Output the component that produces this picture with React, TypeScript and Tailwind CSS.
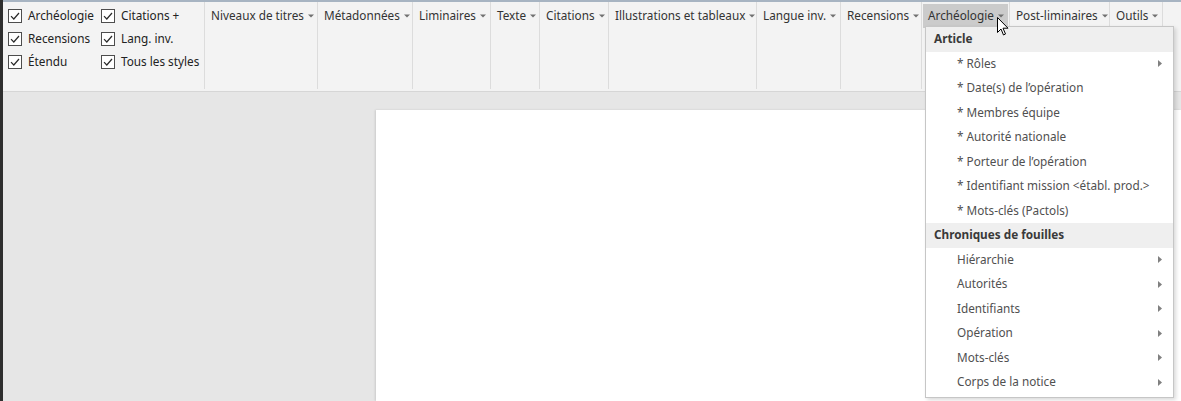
import React from "react";

const font = { fontFamily: '"Noto Sans", "Open Sans", sans-serif' };

const Caret = () => (
  <svg width="6" height="4" viewBox="0 0 6 4" className="ml-[4px] mt-[1px] shrink-0">
    <path d="M0 0.5 L6 0.5 L3 3.5 Z" fill="#707070" />
  </svg>
);

const Check = ({ label }: { label: string }) => (
  <div className="flex items-center h-[23px] gap-[6px] whitespace-nowrap">
    <svg width="14" height="14" viewBox="0 0 14 14" className="shrink-0">
      <rect x="0.5" y="0.5" width="13" height="13" fill="#fff" stroke="#4d4d4d" />
      <path d="M3 7.2 L5.8 10 L11 4" fill="none" stroke="#2b2b2b" strokeWidth="1.2" />
    </svg>
    <span className="text-[11.75px] text-[#222]">{label}</span>
  </div>
);

const groups: { label: string; w: string; active?: boolean }[] = [
  { label: "Niveaux de titres", w: "w-[113px]" },
  { label: "Métadonnées", w: "w-[95px]" },
  { label: "Liminaires", w: "w-[78px]" },
  { label: "Texte", w: "w-[49px]" },
  { label: "Citations", w: "w-[69px]" },
  { label: "Illustrations et tableaux", w: "w-[148px]" },
  { label: "Langue inv.", w: "w-[84px]" },
  { label: "Recensions", w: "w-[81px]" },
  { label: "Archéologie", w: "w-[88px]", active: true },
  { label: "Post-liminaires", w: "w-[100px]" },
  { label: "Outils", w: "w-[53px]" },
];

const Arrow = () => (
  <svg width="4" height="7" viewBox="0 0 4 7">
    <path d="M0 0 L4 3.5 L0 7 Z" fill="#808080" />
  </svg>
);

type Row = { t: string; h?: boolean; sub?: boolean };
const rows: Row[] = [
  { t: "Article", h: true },
  { t: "* Rôles", sub: true },
  { t: "* Date(s) de l’opération" },
  { t: "* Membres équipe" },
  { t: "* Autorité nationale" },
  { t: "* Porteur de l’opération" },
  { t: "* Identifiant mission <établ. prod.>" },
  { t: "* Mots-clés (Pactols)" },
  { t: "Chroniques de fouilles", h: true },
  { t: "Hiérarchie", sub: true },
  { t: "Autorités", sub: true },
  { t: "Identifiants", sub: true },
  { t: "Opération", sub: true },
  { t: "Mots-clés", sub: true },
  { t: "Corps de la notice", sub: true },
];

export default function App() {
  return (
    <div className="relative w-[1181px] h-[401px] overflow-hidden flex bg-[#e6e6e6]" style={font}>
      <div className="w-[3px] h-full bg-[#2e2e2e]" />
      <div className="flex-1 flex flex-col">
        <div className="h-[2px] bg-[#a7b4c2]" />
        <div className="h-[90px] bg-[#f3f3f3] border-b border-[#d6d6d6] flex">
          <div className="w-[202px] shrink-0 border-r border-[#dcdcdc] flex gap-[8px] pl-[5px] pt-[2px] mb-[2px]">
            <div className="w-[85px]">
              <Check label="Archéologie" />
              <Check label="Recensions" />
              <Check label="Étendu" />
            </div>
            <div>
              <Check label="Citations +" />
              <Check label="Lang. inv." />
              <Check label="Tous les styles" />
            </div>
          </div>
          {groups.map((g) => (
            <div key={g.label} className={`${g.w} shrink-0 border-r border-[#dcdcdc] mb-[2px] pl-[1px]`}>
              <div
                className={`h-[24px] inline-flex items-center whitespace-nowrap pl-[5px] pr-[4px] text-[11.75px] text-[#333] ${
                  g.active ? "bg-[#cbcbcb]" : ""
                }`}
              >
                {g.label}
                <Caret />
              </div>
            </div>
          ))}
        </div>
        <div className="flex-1 pt-[18px] pl-[373px]">
          <div className="h-full bg-white shadow-[-1px_0_2px_rgba(0,0,0,0.12)]" />
        </div>
      </div>

      <div className="absolute left-[925px] top-[26px] w-[249px] bg-white border border-[#c6c6c6] shadow-[2px_2px_4px_rgba(0,0,0,0.15)] pb-[2px]">
        {rows.map((r, i) =>
          r.h ? (
            <div key={i} className="h-[24.5px] flex items-center bg-[#efefef] pl-[8px] text-[11.75px] font-bold text-[#3a3a3a] whitespace-nowrap">
              {r.t}
            </div>
          ) : (
            <div key={i} className="h-[24.5px] flex items-center justify-between pl-[31px] pr-[11px] text-[11.75px] text-[#505050] whitespace-nowrap">
              <span>{r.t}</span>
              {r.sub && <Arrow />}
            </div>
          )
        )}
      </div>

      <svg className="absolute left-[997px] top-[17px]" width="13" height="20" viewBox="0 0 13 20">
        <path d="M0.5 0.5 L0.5 15.5 L4 12 L6.5 18 L8.5 17 L6 11.2 L11 11.2 Z" fill="#fff" stroke="#000" strokeWidth="1" />
      </svg>
    </div>
  );
}
